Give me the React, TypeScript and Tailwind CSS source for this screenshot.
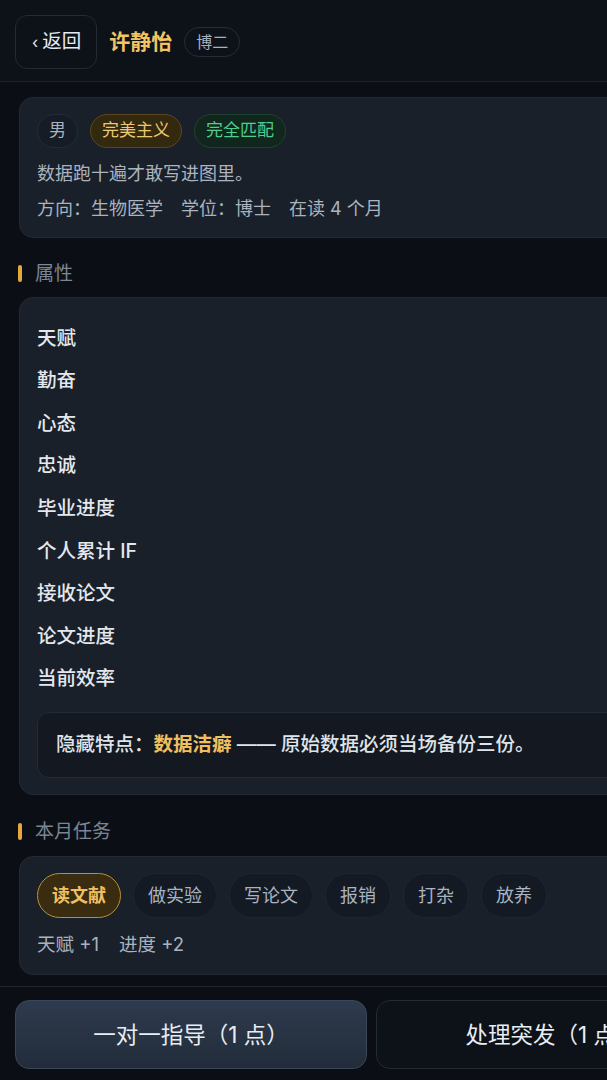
import React from "react";

const ATTRS = [
  { label: "天赋", value: "62" },
  { label: "勤奋", value: "71" },
  { label: "心态", value: "58" },
  { label: "忠诚", value: "64" },
  { label: "毕业进度", value: "3%" },
  { label: "个人累计 IF", value: "0.0" },
  { label: "接收论文", value: "0" },
  { label: "论文进度", value: "0%" },
  { label: "当前效率", value: "1.00" },
];

const TASKS = ["读文献", "做实验", "写论文", "报销", "打杂", "放养"];

function SectionTitle({ children }: { children: React.ReactNode }) {
  return (
    <div className="flex items-center gap-[13px] pl-[18px]">
      <span className="h-[17px] w-[4px] rounded-full bg-[#e5a93b]" />
      <span className="text-[19px] text-[#7b8594]">{children}</span>
    </div>
  );
}

export default function App() {
  const [task, setTask] = React.useState(0);

  return (
    <div
      className="h-[1080px] w-full overflow-hidden bg-[#0b0f15]"
      style={{ fontFamily: '"Inter", "Noto Sans CJK SC", "Noto Sans", sans-serif' }}
    >
      <div className="flex h-full w-[743px] flex-col">
        {/* top bar */}
        <header className="flex items-center gap-3 border-b border-[#1d232c] bg-[#0d1118] px-[15px] pt-[15px] pb-[12px]">
          <button
            type="button"
            className="flex h-[54px] items-center gap-[4px] rounded-[12px] border border-[#222a35] pr-[15px] pl-[16px] text-[19.5px] text-[#e6eaf0]"
          >
            <span className="text-[16px]">‹</span>
            <span>返回</span>
          </button>
          <h1 className="text-[21px] font-bold text-[#f2c462]">许静怡</h1>
          <span className="rounded-full border border-[#262d38] px-[11px] py-[2px] text-[16px] text-[#a7b0bd]">
            博二
          </span>
        </header>

        <main className="flex flex-1 flex-col pt-[15px]">
          {/* profile card */}
          <section className="mx-[19px] rounded-[14px] border border-[#232a35] bg-[#19202a] px-[17px] pt-[16px] pb-[15px]">
            <div className="flex items-center gap-3">
              <span className="rounded-full border border-[#252c37] bg-[#161c25] px-[11px] py-[3px] text-[17px] text-[#aab3c0]">
                男
              </span>
              <span className="rounded-full border border-[#5b4620] bg-[#33290f] px-[11px] py-[3px] text-[17px] text-[#ecc774]">
                完美主义
              </span>
              <span className="rounded-full border border-[#1f4331] bg-[#11261c] px-[11px] py-[3px] text-[17px] text-[#4fcf8f]">
                完全匹配
              </span>
            </div>
            <p className="mt-[12px] text-[18px] text-[#aab3c0]">数据跑十遍才敢写进图里。</p>
            <p className="mt-[8px] flex gap-[18px] text-[18px] text-[#aab3c0]">
              <span>方向：生物医学</span>
              <span>学位：博士</span>
              <span>在读 4 个月</span>
            </p>
          </section>

          <div className="mt-[22px]">
            <SectionTitle>属性</SectionTitle>
          </div>

          {/* attributes */}
          <section className="mx-[19px] mt-[9px] rounded-[14px] border border-[#232a35] bg-[#19202a] px-[17px] pt-[19px] pb-[16px]">
            <ul className="flex flex-col">
              {ATTRS.map((a) => (
                <li key={a.label} className="flex h-[42.6px] items-center justify-between text-[19.5px] font-medium text-[#e4e8ee]">
                  <span>{a.label}</span>
                  <span className="text-[17px] text-[#aab3c0]">{a.value}</span>
                </li>
              ))}
            </ul>
            <div className="mt-[12px] rounded-[12px] border border-[#242b36] bg-[#131821] px-[18px] py-[17px] text-[19.5px] font-medium text-[#dfe4ea]">
              隐藏特点：<span className="font-bold text-[#f0c060]">数据洁癖</span> —— 原始数据必须当场备份三份。
            </div>
          </section>

          <div className="mt-[23px]">
            <SectionTitle>本月任务</SectionTitle>
          </div>

          {/* tasks */}
          <section className="mx-[19px] mt-[10px] rounded-[14px] border border-[#232a35] bg-[#19202a] px-[17px] pt-[16px] pb-[15px]">
            <div className="flex items-center gap-3">
              {TASKS.map((t, i) => (
                <button
                  key={t}
                  type="button"
                  onClick={() => setTask(i)}
                  className={
                    i === task
                      ? "h-[45px] rounded-full border border-[#b8903a] bg-[#3a2c10] px-[14px] text-[18px] font-bold text-[#f0c060]"
                      : "h-[45px] rounded-full border border-[#1e2530] bg-[#141a23] px-[14px] text-[18px] text-[#a9b3c1]"
                  }
                >
                  {t}
                </button>
              ))}
            </div>
            <p className="mt-[13px] flex gap-[20px] text-[18.5px] text-[#a9b3c1]">
              <span>天赋 +1</span>
              <span>进度 +2</span>
            </p>
          </section>
        </main>

        {/* bottom actions */}
        <footer className="grid grid-cols-2 gap-[9px] border-t border-[#1d232c] px-[15px] pt-[13px] pb-[11px]">
          <button
            type="button"
            className="h-[69px] rounded-[14px] border border-[#3a4757] bg-gradient-to-b from-[#2e3b4e] to-[#222c3a] text-[22.5px] text-[#e8edf3]"
          >
            一对一指导（1 点）
          </button>
          <button
            type="button"
            className="h-[69px] rounded-[14px] border border-[#232a35] bg-[#0d1118] text-[22.5px] text-[#e8edf3]"
          >
            处理突发（1 点）
          </button>
        </footer>
      </div>
    </div>
  );
}
